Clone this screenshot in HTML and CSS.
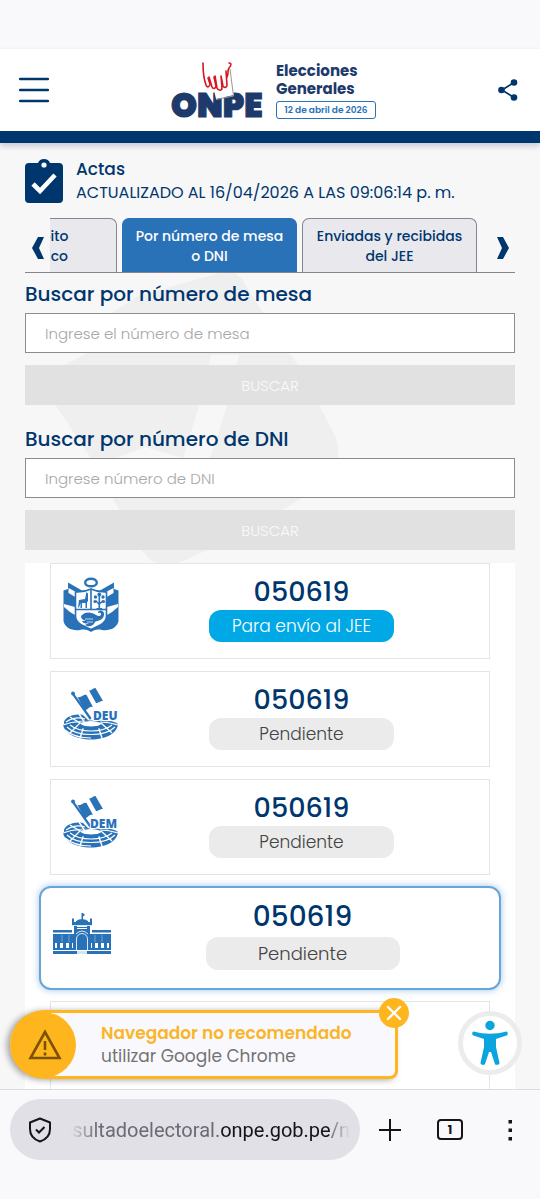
FILE: index.html
```html
<!DOCTYPE html>
<html lang="es">
<head>
<meta charset="utf-8">
<meta name="viewport" content="width=device-width, initial-scale=1">
<title>ONPE - Elecciones Generales 2026</title>
<link rel="stylesheet" href="styles.css">
</head>
<body>
<svg class="sprites" aria-hidden="true">
  <symbol id="hemicycle" viewBox="0 0 56 56">
    <g fill="#2a72b8">
      <circle cx="10" cy="8.500" r="1.900"/>
      <path d="M9 9.500 11 8.500 28.500 33 27 35Z"/>
      <path d="M14.500 12c4 1 6-3 9-2l6.500 12c-4-1-5 3-8.500 3.500Z"/>
      <path d="M26 5.500c3 0 3-2 6.500-2.500L40 16c-3.500 0-4 2-7 2Z"/>
      <path d="M1 39C0 33 10 28 20 30L26 36C17 35 12 36 1 39Z"/>
      <path d="M0 39.500C8 36 18 35.500 28 35.500S48 36 55 39.500C54 48 43 54.500 28 54.500S1 48 0 39.500Z"/>
      <path d="M46 36c4 0 8 2 9 3l-12-2Z"/>
    </g>
    <g fill="none" stroke="#fff" stroke-width="1.100">
      <path d="M3 37C9 33 16 32 22 34M0 40C8 37 15 36.500 20 37M37 37c6 0 12 1 18 3"/>
      <path d="M7 40c5 4 12 6 21 6s16-2 21-6M4 42c5 5 14 7.500 24 7.500S47 47 52 42M2 45c6 5 16 8 26 8"/>
      <path d="M7 32 17 38 7 48M16 29 22 38 17 53M34 38 39 53M38 38 49 48" stroke-width="1.400"/>
    </g>
    <path d="M17 38.500c6-3.500 16-3.500 22 0-2 2.500-6 3.500-11 3.500s-9-1-11-3.500Z" fill="#fff"/>
    <path d="M18 39.500c3 2.500 17 2.500 20 0l1.500 2c-4 4-19 4-23 0Z" fill="#2a72b8"/>
  </symbol>
  <symbol id="warning" viewBox="0 0 34 32">
    <path d="M17 3 31.500 29h-29Z" fill="none" stroke="#7a5200" stroke-width="2.600"/>
    <path d="M17 12v9M17 23.500v3" stroke="#7a5200" stroke-width="2.600"/>
  </symbol>
</svg>

<div class="status-strip"></div>

<header class="site-header">
  <button class="icon-button" aria-label="Menú">
    <svg width="30" height="28" viewBox="0 0 30 28"><path d="M1 3h28M1 14h28M1 25h28" stroke="#00366e" stroke-width="2.400" stroke-linecap="round"/></svg>
  </button>
  <div class="brand">
    <svg class="logo" viewBox="0 0 93 58" role="img" aria-label="ONPE">
      <text x="0" y="56" class="logo-text">ONPE</text>
      <path d="M43 29 59 7 63 34 45 38Z" fill="#fff"/>
      <path d="M59 8 62.500 35 45 38.500" fill="none" stroke="#999" stroke-width="1"/>
      <g fill="none" stroke="#d9141e" stroke-width="1.600" stroke-linecap="round" stroke-linejoin="round">
        <path d="M32 2c0 7 0 14 3 22 1 3 4 2 4-1l-2-6"/>
        <path d="M38 16l3 10c1 2 4 2 4-1l-2-9M44 15l2 12c1 3 5 3 5 0l-1-12M50 15l2 10c1 2 4 2 4-1l-1-14"/>
        <path d="M58 2c3 0 2 3 0 5-2 3 0 6-2 9"/>
      </g>
    </svg>
    <div class="brand-text">
      <strong class="brand-title">Elecciones<br>Generales</strong>
      <span class="brand-date">12 de abril de 2026</span>
    </div>
  </div>
  <button class="icon-button" aria-label="Compartir">
    <svg width="20" height="22" viewBox="0 0 20 22"><path d="M16 3.500 4 11l12 7.500" fill="none" stroke="#00366e" stroke-width="1.800"/><circle cx="16" cy="3.500" r="3.300" fill="#00366e"/><circle cx="3.500" cy="11" r="3.300" fill="#00366e"/><circle cx="16" cy="18.500" r="3.300" fill="#00366e"/></svg>
  </button>
</header>

<main class="page">
  <svg class="watermark" width="300" height="300" viewBox="45 268 300 300" aria-hidden="true">
    <path fill="#efefef" d="M51 388Q50 374 61 367L84 355 100 325Q105 316 115 311L138 296 206 277 223 272Q237 270 243 281L263 313 301 370 336 438Q341 453 335 467 315 491 289 506L241 535 178 563Q158 567 148 558L138 545 117 506 95 464 58 409Q52 400 51 388Z"/>
    <path fill="#f7f7f7" d="M211 355 239 355 226 409 208 465 112 468 100 464 145 447 183 458 198 409Z"/>
  </svg>

  <div class="page-title">
    <svg width="38" height="44" viewBox="0 0 38 44" aria-hidden="true">
      <path fill="#00366e" d="M4 4h9C14 1.500 16 0 19 0s5 1.500 6 4h9a4 4 0 0 1 4 4v32a4 4 0 0 1-4 4H4a4 4 0 0 1-4-4V8a4 4 0 0 1 4-4Z"/>
      <circle cx="19" cy="6" r="2.600" fill="#fff"/>
      <path d="m8 25 7 7 15-16" fill="none" stroke="#fff" stroke-width="4.600"/>
    </svg>
    <div>
      <h1 class="title">Actas</h1>
      <p class="updated">ACTUALIZADO AL 16/04/2026 A LAS 09:06:14 p. m.</p>
    </div>
  </div>

  <div class="tabs">
    <button class="tab-arrow" aria-label="Anterior"><svg width="12" height="24" viewBox="0 0 12 24"><path fill="#00366e" d="M6 1h6L7 12l5 11H6L0 12Z"/></svg></button>
    <div class="tab-strip">
      <button class="tab">Por ámbito<br>geográfico</button>
      <button class="tab tab-active">Por número de mesa o DNI</button>
      <button class="tab">Enviadas y recibidas del JEE</button>
    </div>
    <button class="tab-arrow" aria-label="Siguiente"><svg width="12" height="24" viewBox="0 0 12 24"><path fill="#00366e" d="M6 1H0l5 11L0 23h6l6-11Z"/></svg></button>
  </div>

  <form class="search">
    <label class="search-label" for="mesa">Buscar por número de mesa</label>
    <input class="search-input" id="mesa" placeholder="Ingrese el número de mesa">
    <button class="search-button" type="button" disabled>BUSCAR</button>
  </form>
  <form class="search">
    <label class="search-label" for="dni">Buscar por número de DNI</label>
    <input class="search-input" id="dni" placeholder="Ingrese número de DNI">
    <button class="search-button" type="button" disabled>BUSCAR</button>
  </form>

  <section class="results">
    <article class="card">
      <svg class="card-icon" viewBox="0 0 56 56" aria-hidden="true">
        <ellipse cx="28" cy="5.500" rx="5.800" ry="3.800" fill="none" stroke="#2a72b8" stroke-width="2.400"/>
        <path fill="#2a72b8" d="M5 5.500 19 13.500H37L51 5.500V12L55.500 13.500V44C54 51 47 54 39 53 34 52 31 53 28 55 25 53 22 52 17 53 9 54 2 51 .5 44V13.500L5 12Z"/>
        <path fill="#fff" d="M5.500 11 14 15.500V21L5.500 16ZM1 27 12 30V38L7 35 1 30ZM50.500 11 42 15.500V21L50.500 16ZM55 27 44 30V38L49 35 55 30Z"/>
        <path fill="#fff" stroke="#2a72b8" stroke-width="1.600" d="M12.500 15q8 .500 15.500-3 7.500 3.500 15.500 3v24c0 8-9 10-15.500 13.500C21.500 49 12.500 47 12.500 39Z"/>
        <path d="M13 32.500h30M28 13v20" stroke="#2a72b8" stroke-width="1.600"/>
        <path fill="#2a72b8" d="M23.500 15l1.500 1.500V24l-1 1.500V31h-1.500v-5H19v5h-1.500v-5L16 30.500h-1L16 23l6-1Z"/>
        <g fill="#2a72b8"><path d="M35.500 19h1.600v12h2v1h-5.600v-1h2Z"/><circle cx="36.300" cy="17.500" r="1.900"/><circle cx="32.500" cy="20" r="1.700"/><circle cx="40" cy="20" r="1.700"/><circle cx="32" cy="24.500" r="1.600"/><circle cx="40.500" cy="24.500" r="1.600"/><path d="M33 23l3 3 4-3v2l-4 3-3-3Z"/></g>
        <path fill="#2a72b8" d="M18 39c4-5 11-4 15-1 3 2 5 1 5-1s-3-1-3-1c0-4 7-3 6 2-1 6-6 5-9 7-2 5-7 5-10 3l4-2c-4 1-6 0-7-2h4c-3-1-5-2-5-5Z"/>
        <path d="M22 42h8M24 45h6" stroke="#fff" stroke-width=".7"/>
      </svg>
      <div class="card-body"><h2 class="number">050619</h2><span class="badge badge-sent">Para envío al JEE</span></div>
    </article>
    <article class="card">
      <svg class="card-icon" viewBox="0 0 56 56" role="img" aria-label="DEU"><use href="#hemicycle"/><text x="30" y="35" class="flag-text">DEU</text></svg>
      <div class="card-body"><h2 class="number">050619</h2><span class="badge">Pendiente</span></div>
    </article>
    <article class="card">
      <svg class="card-icon" viewBox="0 0 56 56" role="img" aria-label="DEM"><use href="#hemicycle"/><text x="27" y="35" class="flag-text">DEM</text></svg>
      <div class="card-body"><h2 class="number">050619</h2><span class="badge">Pendiente</span></div>
    </article>
    <article class="card card-selected">
      <svg class="card-icon" viewBox="0 0 58 41" aria-hidden="true">
        <g fill="#2a72b8">
          <path d="M0 17h19v2.500H0ZM39 17h19v2.500H39ZM0 21h58v16H0ZM0 38h58v3H0Z"/>
          <path d="M19 9h20v3l-2 1v24H21V13l-2-1ZM23 8q6-4 12 0v1H23ZM28.500 0h1.500l2 2-2 1.500V7h-1.500Z"/>
          <path d="M20 5l1 1v4h-2V6ZM38 5l1 1v4h-2V6Z"/>
        </g>
        <g fill="#fff">
          <path d="M2 30h2v5H2ZM7 30h3v5H7ZM13 30h3v5h-3ZM19 30h1v5h-1ZM38 30h1v5h-1ZM42 30h3v5h-3ZM48 30h3v5h-3ZM54 30h2v5h-2Z"/>
          <path d="M0 37h24v1H0ZM34 37h24v1H34ZM24 38h10v3H24Z" opacity=".8"/>
          <path d="M24 13h10v3H24Z"/>
        </g>
        <path d="M24 14.500h10" stroke="#2a72b8"/>
        <path d="M20 12.500h18M23.500 37V26a5.500 5.500 0 0 1 11 0v11M23 21q6-6 12 0" fill="none" stroke="#d8e8f6" stroke-width="1"/>
        <path d="M16 22v7M9 22v7M42 22v7M49 22v7" stroke="#7fb0dc" stroke-width=".8"/>
      </svg>
      <div class="card-body"><h2 class="number">050619</h2><span class="badge">Pendiente</span></div>
    </article>
    <article class="card"></article>
  </section>

  <aside class="toast">
    <span class="toast-icon"><svg width="34" height="32"><use href="#warning"/></svg></span>
    <p class="toast-text"><strong>Navegador no recomendado</strong><br>utilizar Google Chrome</p>
    <button class="toast-close" aria-label="Cerrar"><svg width="16" height="16" viewBox="0 0 16 16"><path d="m2 2 12 12M14 2 2 14" stroke="#fff" stroke-width="2.400" stroke-linecap="round"/></svg></button>
  </aside>
  <button class="a11y" aria-label="Accesibilidad">
    <svg width="36" height="46" viewBox="0 0 36 46"><circle cx="18" cy="5.500" r="4.700" fill="#0aa5dc"/><path fill="#0aa5dc" d="M2 11.500c10 3 22 3 32 0 2 0 2.500 3 .5 4L24 19v8l3.500 16c0 2-4 2.500-4.500 1l-4-12h-2l-4 12c-.5 1.500-4.500 1-4.500-1L12 27v-8L1.500 15.500c-2-1-1.500-4 .5-4Z"/></svg>
  </button>
</main>

<nav class="browser-bar">
  <div class="url-pill">
    <svg width="24" height="26" viewBox="0 0 24 26" aria-hidden="true"><path d="M12 1.500 22 5.500V12c0 6-4 10.500-10 12.500C6 22.500 2 18 2 12V5.500Z" fill="none" stroke="#15141a" stroke-width="2" stroke-linejoin="round"/><path d="m8 12.500 3 3 5.500-5.500" fill="none" stroke="#15141a" stroke-width="2"/></svg>
    <div class="url"><span>resultadoelectoral.<b>onpe.gob.pe</b>/n</span></div>
  </div>
  <button class="nav-button" aria-label="Nueva pestaña"><svg width="22" height="22" viewBox="0 0 22 22"><path d="M11 0v22M0 11h22" stroke="#15141a" stroke-width="2"/></svg></button>
  <button class="nav-button" aria-label="Pestañas"><span class="tab-count">1</span></button>
  <button class="nav-button" aria-label="Más opciones"><svg width="4" height="22" viewBox="0 0 4 22"><path d="M.5 1h3.500v3.500H.5ZM.5 9.500h3.500V13H.5ZM.5 18h3.500v3.500H.5Z" fill="#15141a"/></svg></button>
</nav>
</body>
</html>
```
FILE: styles.css
```css
* { box-sizing: border-box; }

body {
  margin: 0;
  height: 100vh;
  display: flex;
  flex-direction: column;
  overflow: hidden;
  background: #f7f7f7;
  color: #00366e;
  font-family: Poppins, Inter, "Open Sans", sans-serif;
}

h1, h2, p { margin: 0; }
button { font: inherit; color: inherit; border: 0; padding: 0; background: none; }
svg { display: block; flex: none; }
.sprites { position: absolute; width: 0; height: 0; }

.status-strip { flex: none; height: 49px; background: #f9f9fb; }

.site-header {
  flex: none;
  position: relative;
  display: flex;
  align-items: center;
  justify-content: space-between;
  height: 94px;
  padding: 0 22px 0 19px;
  background: #fff;
  border-bottom: 12px solid #00366e;
  box-shadow: 0 3px 6px rgba(0, 20, 80, .2);
}
.icon-button { display: flex; }
.brand { display: flex; align-items: center; gap: 12px; }
.logo { width: 93px; height: 58px; overflow: visible; }
.logo-text { font-size: 33px; font-weight: 900; fill: #1d3a6b; stroke: #1d3a6b; stroke-width: 1px; }
.brand-text { display: flex; flex-direction: column; align-items: flex-start; gap: 3px; }
.brand-title { font-size: 15px; line-height: 18px; font-weight: 700; color: #1d3a6b; }
.brand-date {
  width: 100px;
  border: 1px solid #2a72b8;
  border-radius: 3px;
  font-size: 9px;
  line-height: 16px;
  font-weight: 600;
  text-align: center;
  color: #2a72b8;
}

.page { flex: 1; min-height: 0; position: relative; padding: 12px 25px 0; overflow: hidden; }
.page > * { position: relative; }
.page > .watermark { position: absolute; left: 45px; top: 125px; }

.page-title { display: flex; align-items: center; gap: 13px; height: 52px; }
.title { font-size: 17px; line-height: 24px; font-weight: 500; }
.updated { font-size: 16px; line-height: 24px; white-space: nowrap; }

.tabs { display: flex; align-items: center; margin-top: 11px; border-bottom: 1px solid #86868a; }
.tab-arrow { flex: none; display: flex; justify-content: center; width: 25px; padding-top: 6px; }
.tab-strip { flex: 1; min-width: 0; display: flex; justify-content: flex-end; gap: 5px; padding-right: 13px; overflow: hidden; }
.tab {
  flex: none;
  width: 175px;
  height: 54px;
  padding: 1px 11px 0;
  border: 1px solid #86868a;
  border-bottom: 0;
  border-radius: 7px 7px 0 0;
  background: #e8e8ed;
  font-size: 14px;
  line-height: 20px;
  font-weight: 500;
}
.tab-active { background: #2a72b8; border-color: #2a72b8; color: #fff; }

.search { display: flex; flex-direction: column; margin-bottom: 13px; }
.search-label { margin: 7px 0 5px; font-size: 20px; line-height: 28px; font-weight: 500; }
.search-input {
  height: 40px;
  padding: 0 19px;
  border: 1px solid #8c8c8c;
  background: #fff;
  font-family: inherit;
  font-size: 15px;
  font-weight: 300;
}
.search-input::placeholder { color: #a8a8a8; opacity: 1; }
.search-button { height: 40px; margin-top: 12px; background: #e1e1e1; color: #fafafa; font-size: 15px; font-weight: 300; }

.results { padding: 0 25px; background: #fff; }
.card {
  display: grid;
  grid-template-columns: 80px 1fr;
  align-items: start;
  height: 96px;
  margin-bottom: 12px;
  padding: 13px 17px 0 0;
  border: 1px solid #e4e4e4;
  background: #fff;
}
.card-icon { width: 56px; height: 56px; justify-self: center; overflow: visible; }
.flag-text {
  font-family: "Open Sans", sans-serif;
  font-size: 12px;
  font-weight: 800;
  fill: #2a72b8;
  stroke: #fff;
  stroke-width: 2px;
  paint-order: stroke;
}
.card-body { display: flex; flex-direction: column; align-items: center; }
.number { font-size: 27px; line-height: 30px; font-weight: 500; }
.badge {
  width: 185px;
  margin-top: 3px;
  border-radius: 12px;
  background: #ebebeb;
  color: #444;
  font-size: 17px;
  line-height: 32px;
  font-weight: 300;
  text-align: center;
}
.badge-sent { background: #00a9e5; color: #fff; }
.card-selected {
  position: relative;
  height: 104px;
  margin: -1px -11px 11px;
  padding-top: 14px;
  grid-template-columns: 82px 1fr;
  border: 2px solid #68a6d8;
  border-radius: 12px;
  box-shadow: 0 0 7px rgba(60, 140, 210, .5);
}
.card-selected .card-icon { width: 58px; height: 41px; margin-top: 11px; }
.card-selected .number { font-size: 28px; }
.card-selected .badge { width: 194px; margin-top: 5px; line-height: 33px; font-size: 18px; }

.page > .toast {
  position: absolute;
  left: 10px;
  bottom: 10px;
  display: flex;
  align-items: center;
  width: 388px;
  height: 69px;
  border: 3px solid #ffb61e;
  border-left: 0;
  border-radius: 35px 0 8px 35px;
  background: #f9f9fd;
  box-shadow: -3px 1px 6px rgba(0, 0, 0, .35);
}
.toast-icon {
  flex: none;
  display: flex;
  align-items: center;
  justify-content: center;
  width: 66px;
  height: 66px;
  padding-left: 4px;
  border-radius: 50%;
  background: #ffb61e;
}
.toast-text { margin-left: 25px; font-size: 17px; line-height: 23px; color: #737373; white-space: nowrap; }
.toast-text strong { font-weight: 600; color: #fab52a; }
.toast-close {
  position: absolute;
  right: -14px;
  top: -15px;
  display: flex;
  align-items: center;
  justify-content: center;
  width: 30px;
  height: 30px;
  border-radius: 50%;
  background: #ffb61e;
}
.page > .a11y {
  position: absolute;
  right: 18px;
  bottom: 14px;
  display: flex;
  align-items: center;
  justify-content: center;
  width: 64px;
  height: 64px;
  border: 5px solid #ececec;
  border-radius: 50%;
  background: #fff;
}

.browser-bar {
  flex: none;
  display: flex;
  align-items: flex-start;
  height: 110px;
  padding: 9px 0 0 10px;
  border-top: 1px solid #dcdce0;
  background: #f9f9fb;
}
.url-pill {
  flex: 1;
  min-width: 0;
  display: flex;
  align-items: center;
  gap: 18px;
  height: 61px;
  padding: 0 10px 0 18px;
  border-radius: 31px;
  background: #e0e0e6;
}
.url {
  flex: 1;
  display: flex;
  justify-content: flex-end;
  overflow: hidden;
  font-family: Roboto, sans-serif;
  font-size: 20px;
  line-height: 28px;
  color: #6b6a75;
  white-space: nowrap;
  mask-image: linear-gradient(90deg, transparent, #000 28px, #000 calc(100% - 20px), transparent);
}
.url b { font-weight: 400; color: #15141a; }
.nav-button { flex: none; display: flex; align-items: center; justify-content: center; width: 60px; height: 61px; }
.tab-count {
  width: 26px;
  border: 2px solid #15141a;
  border-radius: 4px;
  font-size: 12px;
  line-height: 17px;
  font-weight: 700;
  text-align: center;
  color: #15141a;
}
```
